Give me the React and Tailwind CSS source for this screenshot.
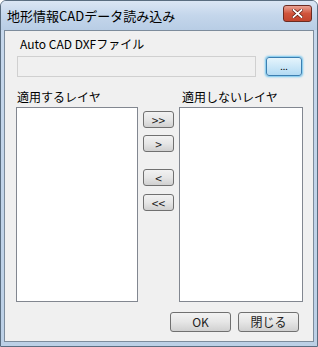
const font = { fontFamily: '"Noto Sans CJK JP", "Liberation Sans", sans-serif' };

function Btn({ children, className = '' }) {
  return (
    <div
      className={
        'flex items-center justify-center rounded-[3px] border border-[#707070] bg-gradient-to-b from-[#f2f2f2] via-[#e6e6e6] to-[#d0d0d0] text-[12px] leading-none text-[#222]' +
        ' ' +
        className
      }
    >
      {children}
    </div>
  );
}

export default function App() {
  return (
    <div
      style={font}
      className="w-[318px] h-[347px] flex flex-col border border-[#5a6d80] rounded-t-[6px] bg-gradient-to-b from-[#c7d8ec] to-[#bcd0e6] overflow-hidden"
    >
      <div className="h-[29px] flex items-center justify-between pl-[6px] pr-[5px] bg-gradient-to-b from-[#dbe6f4] via-[#c4d6eb] to-[#b8cde5]">
        <span className="text-[13px] text-black leading-none">地形情報CADデータ読み込み</span>
        <div className="w-[29px] h-[17px] mb-[4px] rounded-[3px] border border-[#6b2b22] bg-gradient-to-b from-[#e9a294] via-[#d0543c] to-[#c2452e] flex items-center justify-center">
          <svg width="11" height="9" viewBox="0 0 11 9">
            <path d="M1.5 1 L9.5 8 M9.5 1 L1.5 8" stroke="#5a1a10" strokeWidth="3.2" strokeLinecap="square" />
            <path d="M1.5 1 L9.5 8 M9.5 1 L1.5 8" stroke="#ffffff" strokeWidth="1.8" strokeLinecap="square" />
          </svg>
        </div>
      </div>
      <div className="mx-[3px] mb-[4px] flex-1 border border-[#7d8c9c] bg-[#f0f0f0] flex flex-col">
        <div className="pl-[15px] pt-[6px] h-[24px] text-[12px] text-black leading-[14px]">Auto CAD DXFファイル</div>
        <div className="flex items-center pl-[12px] mt-[1px]">
          <div className="w-[239px] h-[21px] border border-[#d0d0d0] bg-[#f0f0f0]" />
          <div className="ml-[10px] w-[36px] h-[19px] rounded-[3px] border border-[#3c7fb1] bg-gradient-to-b from-[#e5f4fc] to-[#b3dbf3] shadow-[0_0_2px_1px_#6ec4ef] flex items-center justify-center text-[9px] leading-none text-black">
            ...
          </div>
        </div>
        <div className="flex mt-[13px] text-[12px] text-black leading-[14px]">
          <span className="pl-[12px] w-[177px]">適用するレイヤ</span>
          <span>適用しないレイヤ</span>
        </div>
        <div className="flex mt-[3px] pl-[11px]">
          <div className="w-[122px] h-[195px] border border-[#828790] bg-white" />
          <div className="w-[41px] flex flex-col items-center pt-[4px]">
            <Btn className="w-[31px] h-[17px]">&gt;&gt;</Btn>
            <Btn className="w-[31px] h-[17px] mt-[7px]">&gt;</Btn>
            <Btn className="w-[31px] h-[17px] mt-[17px]">&lt;</Btn>
            <Btn className="w-[31px] h-[17px] mt-[8px]">&lt;&lt;</Btn>
          </div>
          <div className="w-[124px] h-[195px] border border-[#828790] bg-white" />
        </div>
        <div className="flex justify-end gap-[7px] pr-[14px] mt-[10px]">
          <Btn className="w-[61px] h-[20px]">OK</Btn>
          <Btn className="w-[61px] h-[20px]">閉じる</Btn>
        </div>
      </div>
    </div>
  );
}
